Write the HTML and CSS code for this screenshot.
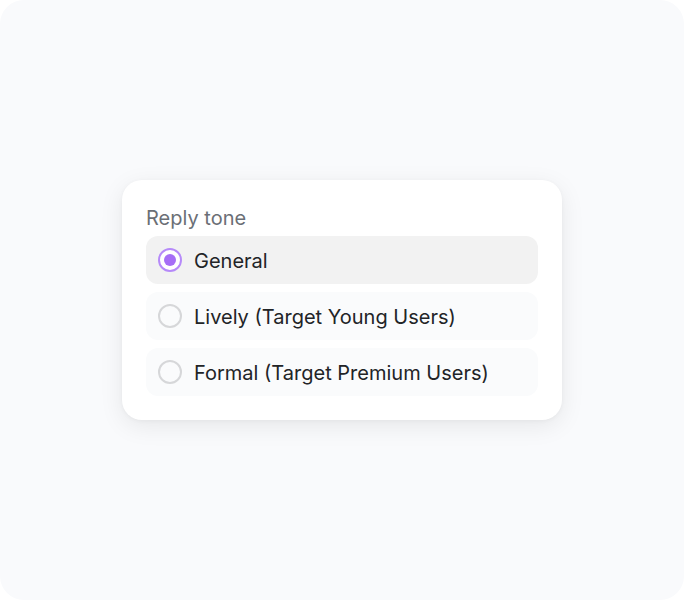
FILE: index.html
```html
<!DOCTYPE html>
<html>
<head>
<meta charset="utf-8">
<link rel="stylesheet" href="styles.css">
</head>
<body>
<div class="stage">
  <div class="card">
    <div class="label">Reply tone</div>
    <div class="options">
      <div class="option selected"><span class="radio"></span><span class="text">General</span></div>
      <div class="option"><span class="radio"></span><span class="text">Lively (Target Young Users)</span></div>
      <div class="option"><span class="radio"></span><span class="text">Formal (Target Premium Users)</span></div>
    </div>
  </div>
</div>
</body>
</html>
```
FILE: styles.css
```css
html, body { margin: 0; padding: 0; background: #ffffff; }
body { font-family: Inter, "Noto Sans", sans-serif; }
.stage {
  width: 684px;
  height: 600px;
  background: #f9fafc;
  border-radius: 24px;
  display: flex;
  align-items: center;
  justify-content: center;
}
.card {
  width: 440px;
  box-sizing: border-box;
  padding: 24px;
  background: #ffffff;
  border-radius: 20px;
  box-shadow: 0 6px 24px rgba(0, 0, 0, 0.08), 0 1px 4px rgba(0, 0, 0, 0.04);
  display: flex;
  flex-direction: column;
  gap: 8px;
}
.label {
  font-size: 20px;
  line-height: 24px;
  color: #6b6f76;
  padding-top: 2px;
  margin-bottom: -2px;
}
.options { display: flex; flex-direction: column; gap: 8px; }
.option {
  height: 48px;
  border-radius: 12px;
  background: #fafbfc;
  display: flex;
  align-items: center;
  gap: 12px;
  padding: 0 12px;
}
.option.selected { background: #f2f2f2; }
.radio {
  width: 24px;
  height: 24px;
  box-sizing: border-box;
  border-radius: 50%;
  border: 2px solid #d6d7d9;
  display: flex;
  align-items: center;
  justify-content: center;
  flex: none;
}
.selected .radio { border: 2.5px solid #b68af9; background: #ffffff; }
.selected .radio::after {
  content: "";
  width: 12px;
  height: 12px;
  border-radius: 50%;
  background: #a66ef6;
}
.text {
  font-size: 20px;
  line-height: 24px;
  color: #222427;
  padding-top: 2px;
}
```
